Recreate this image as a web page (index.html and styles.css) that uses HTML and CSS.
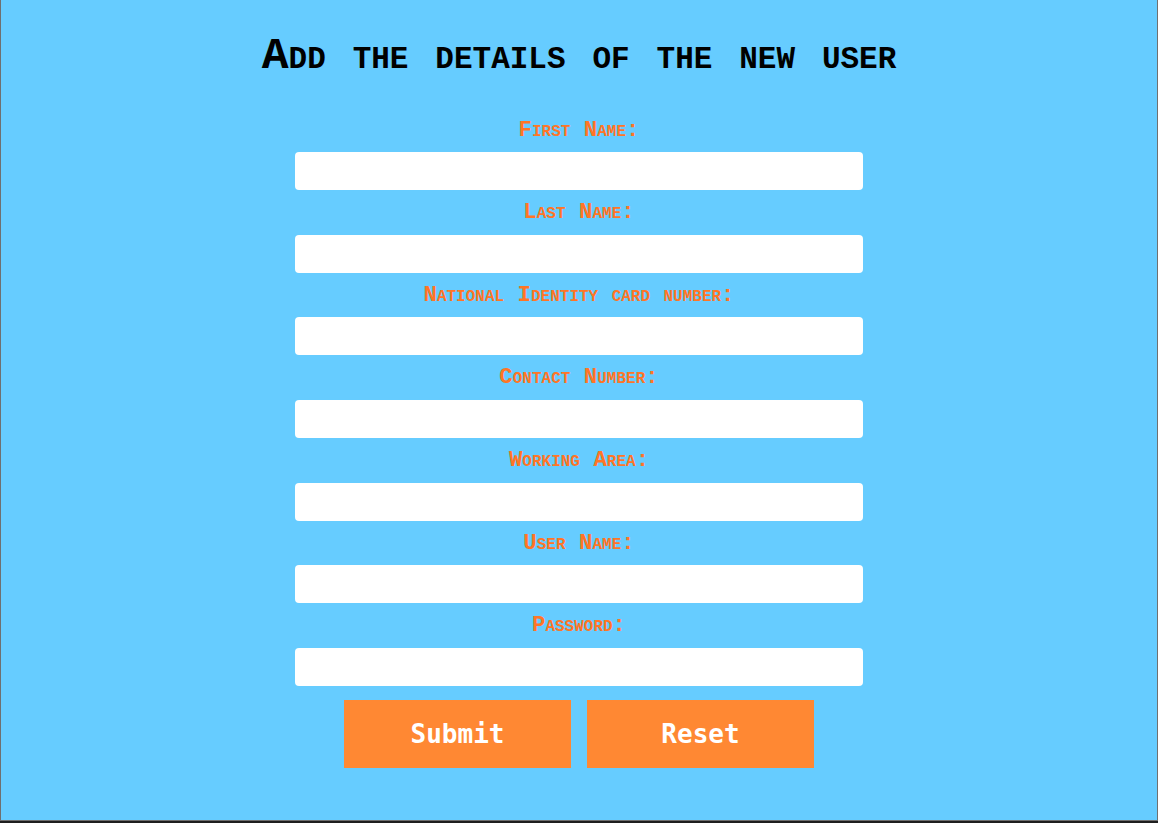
FILE: index.html
```html
<!DOCTYPE html>
<html lang="en">
<head>
<meta charset="utf-8">
<title>Add User</title>
<link rel="stylesheet" href="styles.css">
</head>
<body>
<div class="frame">
  <h1 class="title">Add the details of the new user</h1>
  <form class="user-form">
    <label class="field-label" for="fn">First Name:</label>
    <input class="field-input" id="fn" type="text">
    <label class="field-label" for="ln">Last Name:</label>
    <input class="field-input" id="ln" type="text">
    <label class="field-label" for="nic">National Identity card number:</label>
    <input class="field-input" id="nic" type="text">
    <label class="field-label" for="cn">Contact Number:</label>
    <input class="field-input" id="cn" type="text">
    <label class="field-label" for="wa">Working Area:</label>
    <input class="field-input" id="wa" type="text">
    <label class="field-label" for="un">User Name:</label>
    <input class="field-input" id="un" type="text">
    <label class="field-label" for="pw">Password:</label>
    <input class="field-input" id="pw" type="password">
    <div class="actions">
      <button class="btn" type="submit">Submit</button>
      <button class="btn" type="reset">Reset</button>
    </div>
  </form>
</div>
</body>
</html>
```
FILE: styles.css
```css
html {
  background: #1e1e1e;
}
body {
  margin: 0;
  height: 823px;
  overflow: hidden;
}
.frame {
  box-sizing: border-box;
  height: 821px;
  background: #66ccff;
  border-left: 1px solid #6f6f6f;
  border-right: 1px solid #6f6f6f;
  border-bottom: 1px solid #6f6f6f;
  display: flex;
  flex-direction: column;
  align-items: center;
  padding-top: 31px;
}
.title {
  margin: 0 0 26px;
  font-family: "Courier New", "Liberation Mono", monospace;
  font-variant: small-caps;
  font-weight: bold;
  font-size: 44.8px;
  line-height: 50.7px;
  color: #000;
}
.user-form {
  display: flex;
  flex-direction: column;
  align-items: center;
}
.field-label {
  display: block;
  margin: 10px 0 9.2px;
  font-family: "Courier New", "Liberation Mono", monospace;
  font-variant: small-caps;
  font-weight: bold;
  font-size: 22.4px;
  line-height: 25.4px;
  color: #ff7526;
}
.field-input {
  box-sizing: border-box;
  width: 568px;
  height: 38px;
  margin: 0;
  border: none;
  border-radius: 4px;
  background: #fff;
  padding: 0 10px;
}
.actions {
  display: flex;
  gap: 16px;
  margin-top: 14px;
}
.btn {
  width: 227px;
  height: 68px;
  border: none;
  border-radius: 0;
  background: #ff8833;
  color: #fff;
  font-family: "DejaVu Sans Mono", monospace;
  font-weight: bold;
  font-size: 26px;
  padding: 0;
}
```
